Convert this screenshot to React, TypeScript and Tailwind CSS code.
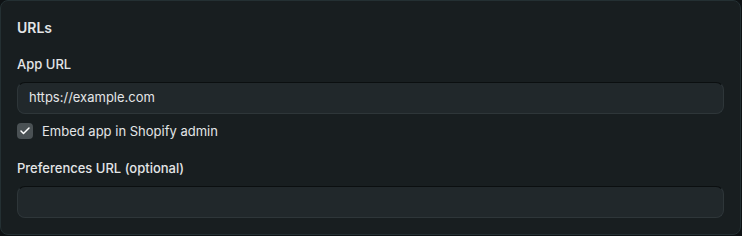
import React from 'react';
import { Check } from 'lucide-react';

const Field = ({ label, value }: { label: string; value?: string }) => (
  <div className="flex flex-col gap-[8px]">
    <label className="text-[13px] font-medium leading-[20px] text-[#e3e5e7]">{label}</label>
    <div className="h-[32px] rounded-[8px] border border-[#2e3639] border-t-[#0b0f10] bg-[#21282b] px-[11px] flex items-center text-[13px] text-[#e3e5e7]">
      {value}
    </div>
  </div>
);

export default function App() {
  return (
    <div className="w-[742px] h-[236px] bg-[#0e1214]" style={{ fontFamily: 'Inter, "Noto Sans", sans-serif' }}>
      <div className="w-[741px] h-[235px] rounded-[8px] border border-[#243033] bg-[#181e20] px-[16px] pt-[17px]">
        <h2 className="text-[14px] font-semibold leading-[20px] text-[#e3e5e7]">URLs</h2>
        <div className="mt-[16px] flex flex-col">
          <Field label="App URL" value="https://example.com" />
          <div className="mt-[7px] flex items-center gap-[9px]">
            <span className="w-[16px] h-[16px] rounded-[4px] bg-[#4a5154] flex items-center justify-center">
              <Check size={12} strokeWidth={3} className="text-white" />
            </span>
            <span className="text-[13px] leading-[20px] text-[#e3e5e7]">Embed app in Shopify admin</span>
          </div>
          <div className="mt-[17px]">
            <Field label="Preferences URL (optional)" />
          </div>
        </div>
      </div>
    </div>
  );
}
